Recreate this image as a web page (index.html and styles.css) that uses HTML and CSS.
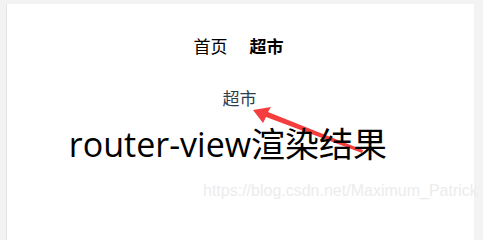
FILE: index.html
```html
<!DOCTYPE html>
<html lang="zh-CN">
<head>
<meta charset="utf-8">
<title>router-view</title>
<link rel="stylesheet" href="styles.css">
</head>
<body>
<div class="card">
  <nav class="nav">
    <a class="nav-link">首页</a>
    <a class="nav-link active">超市</a>
  </nav>
  <div class="view">超市</div>
  <svg class="arrow" width="130" height="50" viewBox="0 0 130 50">
    <path d="M2 3 L20 0 L17 5 L112 43 L111 46 L15 10 L12 16 Z" fill="#f53d3d"/>
  </svg>
  <div class="caption">router-view渲染结果</div>
  <div class="watermark">https://blog.csdn.net/Maximum_Patrick</div>
</div>
</body>
</html>
```
FILE: styles.css
```css
html, body {
  margin: 0;
  padding: 0;
}
body {
  background: #f3f3f3;
  overflow: hidden;
  font-family: "Open Sans", "Noto Sans CJK SC", sans-serif;
}
.card {
  position: relative;
  box-sizing: border-box;
  margin: 4px 0 0 6px;
  width: 468px;
  height: calc(100vh - 4px);
  background: #fff;
  border-left: 1px solid #e4e4e4;
  display: flex;
  flex-direction: column;
  align-items: center;
}
.nav {
  display: flex;
  gap: 22px;
  margin-top: 30px;
  padding-right: 4px;
  font-family: "Noto Sans CJK SC", sans-serif;
  font-size: 17px;
  line-height: 24px;
  color: #000;
}
.nav-link.active {
  font-weight: bold;
}
.view {
  margin-top: 28px;
  padding-right: 2px;
  font-family: "Noto Sans CJK SC", sans-serif;
  font-size: 17px;
  line-height: 24px;
  color: #2c3e50;
}
.caption {
  position: relative;
  margin-top: 13px;
  padding-right: 25px;
  font-size: 34px;
  line-height: 42px;
  color: #000;
}
.arrow {
  position: absolute;
  left: 244px;
  top: 103px;
}
.watermark {
  position: absolute;
  left: 196px;
  top: 178px;
  font-family: "Liberation Sans", Arial, sans-serif;
  font-size: 16px;
  color: #ececec;
  white-space: nowrap;
}
```
